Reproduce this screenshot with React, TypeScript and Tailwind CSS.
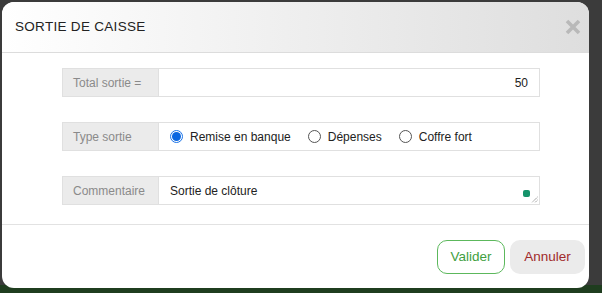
import React from 'react';

export default function App() {
  return (
    <div className="w-[602px] h-[293px] bg-[#3b3b3b] relative overflow-hidden font-['Liberation_Sans',Arial,sans-serif]">
      {/* backdrop hint */}
      <div className="absolute left-0 right-0 bottom-0 h-[8px] bg-[#1f3d1f]" />
      <div className="absolute left-[2px] top-[2px] w-[587px] h-[286px] bg-white rounded-[12px] overflow-hidden flex flex-col">
        {/* header */}
        <div className="h-[51px] shrink-0 flex items-center justify-between pl-[13px] pr-[5px] border-b border-[#dcdcdc] bg-[linear-gradient(to_right,#ffffff,#dedede)]">
          <span className="text-[13.5px] tracking-[0.3px] text-[#222]">SORTIE DE CAISSE</span>
          <svg width="16" height="16" viewBox="0 0 16 16" className="mr-[3px]">
            <path d="M2 2 L14 14 M14 2 L2 14" stroke="#b9b9b9" strokeWidth="3.6" strokeLinecap="butt" />
          </svg>
        </div>

        {/* body */}
        <div className="flex flex-col pt-[15px] pl-[60px] pr-[49px] gap-[25px] text-[12px]">
          <div className="flex h-[29px] border border-[#e0e0e0]">
            <div className="w-[96px] shrink-0 bg-[#ebebeb] border-r border-[#e0e0e0] flex items-center pl-[10px] text-[#8a8a8a]">Total sortie =</div>
            <div className="flex-1 flex items-center justify-end pr-[11px] text-[#222]">50</div>
          </div>

          <div className="flex h-[29px] border border-[#e0e0e0]">
            <div className="w-[96px] shrink-0 bg-[#ebebeb] border-r border-[#e0e0e0] flex items-center pl-[10px] text-[#8a8a8a]">Type sortie</div>
            <div className="flex-1 flex items-center pl-[11px] text-[#222]">
              <span className="w-[13px] h-[13px] rounded-full border-[1px] border-[#1a73e8] flex items-center justify-center">
                <span className="w-[9px] h-[9px] rounded-full bg-[#0a66e0]" />
              </span>
              <span className="ml-[7px]">Remise en banque</span>
              <span className="ml-[17px] w-[13px] h-[13px] rounded-full border border-[#555]" />
              <span className="ml-[7px]">Dépenses</span>
              <span className="ml-[17px] w-[13px] h-[13px] rounded-full border border-[#555]" />
              <span className="ml-[7px]">Coffre fort</span>
            </div>
          </div>

          <div className="flex h-[29px] border border-[#e0e0e0]">
            <div className="w-[96px] shrink-0 bg-[#ebebeb] border-r border-[#e0e0e0] flex items-center pl-[10px] text-[#8a8a8a]">Commentaire</div>
            <div className="flex-1 flex items-center pl-[11px] text-[#222] relative">
              Sortie de clôture
              <span className="absolute right-[9px] bottom-[7px] w-[7px] h-[7px] rounded-[2px] bg-[#15936a]" />
              <svg className="absolute right-[1px] bottom-[1px]" width="7" height="7" viewBox="0 0 7 7">
                <path d="M6.5 1 L1 6.5 M6.5 4 L4 6.5" stroke="#666" strokeWidth="0.8" strokeDasharray="1 0.6" />
              </svg>
            </div>
          </div>
        </div>

        {/* footer */}
        <div className="mt-[19px] border-t border-[#e2e2e2] flex justify-end gap-[5px] pt-[15px] pr-[4px]">
          <button className="h-[34px] w-[68px] rounded-[10px] border border-[#5cb85c] text-[#3fa03f] text-[13.5px] bg-white">Valider</button>
          <button className="h-[34px] w-[75px] rounded-[10px] bg-[#ebebeb] text-[#a12a2a] text-[13.5px]">Annuler</button>
        </div>
      </div>
    </div>
  );
}
